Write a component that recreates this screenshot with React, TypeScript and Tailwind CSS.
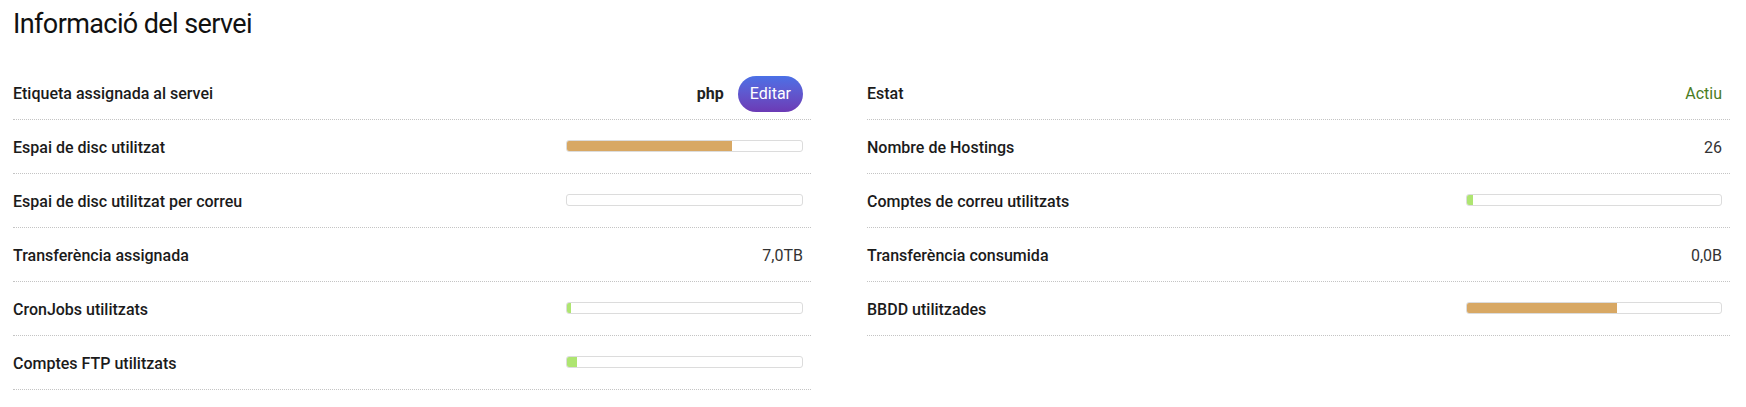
import React from 'react';

type Row = {
  label: string;
  value?: string;
  valueClass?: string;
  bar?: { pct: number; color: string };
  tag?: string;
};

const leftRows: Row[] = [
  { label: 'Etiqueta assignada al servei', tag: 'php' },
  { label: 'Espai de disc utilitzat', bar: { pct: 70, color: 'bg-[#d8a864]' } },
  { label: 'Espai de disc utilitzat per correu', bar: { pct: 0, color: 'bg-[#aee571]' } },
  { label: 'Transferència assignada', value: '7,0TB' },
  { label: 'CronJobs utilitzats', bar: { pct: 1.7, color: 'bg-[#aee571]' } },
  { label: 'Comptes FTP utilitzats', bar: { pct: 4.4, color: 'bg-[#aee571]' } },
];

const rightRows: Row[] = [
  { label: 'Estat', value: 'Actiu', valueClass: 'text-[#4a7c23]' },
  { label: 'Nombre de Hostings', value: '26' },
  { label: 'Comptes de correu utilitzats', bar: { pct: 2.4, color: 'bg-[#aee571]' } },
  { label: 'Transferència consumida', value: '0,0B' },
  { label: 'BBDD utilitzades', bar: { pct: 59, color: 'bg-[#d8a864]' } },
];

function InfoRow({ row }: { row: Row }) {
  return (
    <div className="flex items-center justify-between h-[54px] border-b border-dotted border-[#c4c4c4] pr-[8px]">
      <span className="mt-[2px] text-[16px] font-medium text-[#1b1b1b]">{row.label}</span>

      {row.tag && (
        <div className="mt-[2px] flex items-center gap-[14px]">
          <span className="text-[16px] font-bold text-[#222]">{row.tag}</span>
          <button
            type="button"
            className="h-[36px] px-[12px] rounded-full bg-gradient-to-b from-[#4a70e6] to-[#6b3ab5] text-white text-[16px]"
          >
            Editar
          </button>
        </div>
      )}

      {row.value && (
        <span className={`mt-[2px] text-[16px] ${row.valueClass ?? 'text-[#333]'}`}>{row.value}</span>
      )}

      {row.bar && (
        <div className="-mt-[2px] w-[30%] h-[12px] rounded-[3px] border border-[#dcdcdc] bg-white overflow-hidden">
          <div className={`h-full ${row.bar.color}`} style={{ width: `${row.bar.pct}%` }} />
        </div>
      )}
    </div>
  );
}

export default function App() {
  return (
    <div className="w-[1746px] h-[407px] bg-white px-[13px] font-['Roboto',sans-serif]">
      <div className="h-[66px] pt-[7px]">
        <h1 className="text-[27px] leading-[34px] font-normal tracking-[-0.6px] text-[#111]">
          Informació del servei
        </h1>
      </div>

      <div className="flex gap-[56px] items-start">
        <div className="w-[798px] flex flex-col">
          {leftRows.map((r) => (
            <InfoRow key={r.label} row={r} />
          ))}
        </div>
        <div className="w-[863px] flex flex-col">
          {rightRows.map((r) => (
            <InfoRow key={r.label} row={r} />
          ))}
        </div>
      </div>
    </div>
  );
}
